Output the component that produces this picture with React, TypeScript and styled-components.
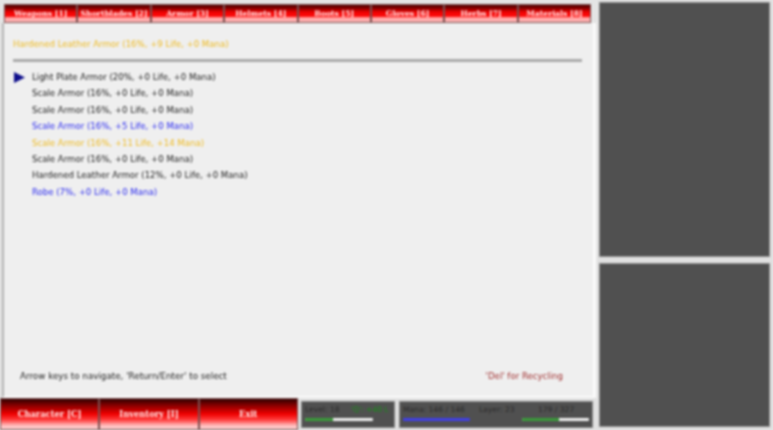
import React from "react"
import styled, { createGlobalStyle } from "styled-components"

const tabs = [
  "Weapons [1]",
  "Shortblades [2]",
  "Armor [3]",
  "Helmets [4]",
  "Boots [5]",
  "Gloves [6]",
  "Herbs [7]",
  "Materials [8]",
]

type Tone = "normal" | "magic" | "rare"

const items: { label: string; tone: Tone }[] = [
  { label: "Light Plate Armor (20%, +0 Life, +0 Mana)", tone: "normal" },
  { label: "Scale Armor (16%, +0 Life, +0 Mana)", tone: "normal" },
  { label: "Scale Armor (16%, +0 Life, +0 Mana)", tone: "normal" },
  { label: "Scale Armor (16%, +5 Life, +0 Mana)", tone: "magic" },
  { label: "Scale Armor (16%, +11 Life, +14 Mana)", tone: "rare" },
  { label: "Scale Armor (16%, +0 Life, +0 Mana)", tone: "normal" },
  { label: "Hardened Leather Armor (12%, +0 Life, +0 Mana)", tone: "normal" },
  { label: "Robe (7%, +0 Life, +0 Mana)", tone: "magic" },
]

const toneColors: Record<Tone, string> = {
  normal: "#222222",
  magic: "#2a2af0",
  rare: "#eebb22",
}

const GlobalStyle = createGlobalStyle`
  html, body {
    margin: 0;
    padding: 0;
    background: #e4e4e4;
    overflow: hidden;
  }
`

const Screen = styled.div`
  display: grid;
  grid-template-columns: 598px 175px;
  width: 773px;
  height: 430px;
  font-family: "DejaVu Sans", sans-serif;
  font-size: 8.58px;
  filter: blur(0.85px);
`

const LeftColumn = styled.div`
  display: flex;
  flex-direction: column;
  min-width: 0;
`

const TabBar = styled.div`
  display: grid;
  grid-template-columns: repeat(8, 73.4px);
  height: 19px;
  margin: 4px 0 0 4px;
`

const redButton = `
  display: flex;
  align-items: center;
  justify-content: center;
  box-sizing: border-box;
  color: #ffeeee;
  font-family: "DejaVu Serif", serif;
  font-weight: 700;
  border: 1px solid #7a5050;
  white-space: nowrap;
`

const Tab = styled.div`
  ${redButton}
  font-size: 7.7px;
  padding-bottom: 1px;
  background: linear-gradient(#4c0000 0%, #8c0000 20%, #f00000 42%, #ff1010 68%, #ffa0a0 74%, #ffb8b8 100%);
`

const Panel = styled.div`
  flex: 1;
  display: flex;
  flex-direction: column;
  box-sizing: border-box;
  margin: 0 2px 0 2px;
  padding: 0 0 0 9px;
  background: #efefef;
  border-left: 2px solid #b4b4b4;
  border-right: 3px solid #fbfbfb;
  border-bottom: 2px solid #fafafa;
`

const EquippedLine = styled.div`
  margin-top: 16px;
  height: 11px;
  line-height: 11px;
  color: #eebb22;
`

const Separator = styled.div`
  height: 3px;
  width: 569px;
  margin: 9px 0 7px 0;
  background: #aaaaaa;
`

const ItemList = styled.div`
  display: flex;
  flex-direction: column;
`

const ItemRow = styled.div`
  position: relative;
  height: 16.4px;
  line-height: 16.4px;
  padding-left: 19px;
`

const ItemText = styled.span<{ $tone: Tone }>`
  color: ${(p) => toneColors[p.$tone]};
`

const Cursor = styled.svg`
  position: absolute;
  left: 1px;
  top: 2.5px;
  width: 11px;
  height: 11px;
`

const Hints = styled.div`
  margin-top: auto;
  margin-bottom: 14px;
  display: flex;
  justify-content: space-between;
  padding: 0 30px 0 7px;
  line-height: 11px;
  font-size: 8.75px;
`

const Hint = styled.span`
  color: #222222;
`

const RecycleHint = styled.span`
  color: #a03030;
  font-size: 8.6px;
`

const BottomBar = styled.div`
  display: flex;
  height: 32px;
  background: #e0e0e0;
`

const ActionButton = styled.div`
  ${redButton}
  width: 99.3px;
  font-size: 8.3px;
  background: linear-gradient(#300000 0%, #8a0000 22%, #f00000 50%, #ff4040 70%, #ffb8b8 88%, #ffd4d4 100%);
`

const StatPanel = styled.div<{ $width: number; $gap: number }>`
  box-sizing: border-box;
  width: ${(p) => p.$width}px;
  height: 27px;
  margin: 3px 0 0 ${(p) => p.$gap}px;
  padding: 3px 3px 0 3px;
  background: #505050;
  border: 1px solid #8a8a8a;
  display: flex;
  flex-direction: column;
  gap: 4px;
`

const StatRow = styled.div`
  display: flex;
  font-size: 7.6px;
  line-height: 9px;
  color: #2a2a2a;
  white-space: nowrap;
`

const StatLabel = styled.span<{ $width: number }>`
  width: ${(p) => p.$width}px;
  flex: none;
`

const Regen = styled.span`
  color: #159015;
`

const BarRow = styled.div`
  display: flex;
  justify-content: space-between;
`

const Bar = styled.div<{ $width: number; $color: string }>`
  width: ${(p) => p.$width}px;
  height: 3px;
  border-radius: 1px;
  background: ${(p) => p.$color};
  overflow: hidden;
`

const BarFill = styled.div<{ $color: string }>`
  height: 100%;
  background: ${(p) => p.$color};
`

const RightColumn = styled.div`
  display: flex;
  flex-direction: column;
  gap: 6px;
  padding: 2px 3px 3px 1px;
  background: #e0e0e0;
`

const SidePanel = styled.div<{ $height: number }>`
  box-sizing: border-box;
  height: ${(p) => p.$height}px;
  background: #505050;
  border: 1px solid #8c8c8c;
`

const App = () => {
  return (
    <Screen>
      <GlobalStyle />
      <LeftColumn>
        <TabBar>
          {tabs.map((tab) => (
            <Tab key={tab}>{tab}</Tab>
          ))}
        </TabBar>
        <Panel>
          <EquippedLine>Hardened Leather Armor (16%, +9 Life, +0 Mana)</EquippedLine>
          <Separator />
          <ItemList>
            {items.map((item, i) => (
              <ItemRow key={i}>
                {i === 0 && (
                  <Cursor viewBox="0 0 11 11">
                    <polygon points="0,0 11,5.5 0,11" fill="#10108c" />
                  </Cursor>
                )}
                <ItemText $tone={item.tone}>{item.label}</ItemText>
              </ItemRow>
            ))}
          </ItemList>
          <Hints>
            <Hint>Arrow keys to navigate, 'Return/Enter' to select</Hint>
            <RecycleHint>'Del' for Recycling</RecycleHint>
          </Hints>
        </Panel>
        <BottomBar>
          <ActionButton>Character [C]</ActionButton>
          <ActionButton>Inventory [I]</ActionButton>
          <ActionButton>Exit</ActionButton>
          <StatPanel $width={94} $gap={3}>
            <StatRow>
              <StatLabel $width={46}>Level: 18</StatLabel>
              <Regen>'Q': +40 L</Regen>
            </StatRow>
            <BarRow>
              <Bar $width={68} $color="#f0f0f0">
                <BarFill $color="#3a9a3a" style={{ width: "41%" }} />
              </Bar>
            </BarRow>
          </StatPanel>
          <StatPanel $width={194} $gap={4}>
            <StatRow>
              <StatLabel $width={76}>Mana: 146 / 146</StatLabel>
              <StatLabel $width={59}>Layer: 23</StatLabel>
              <span>179 / 327</span>
            </StatRow>
            <BarRow>
              <Bar $width={67} $color="#3f3fe8" />
              <Bar $width={67} $color="#f0f0f0">
                <BarFill $color="#3a9a3a" style={{ width: "55%" }} />
              </Bar>
            </BarRow>
          </StatPanel>
        </BottomBar>
      </LeftColumn>
      <RightColumn>
        <SidePanel $height={255} />
        <SidePanel $height={164} />
      </RightColumn>
    </Screen>
  )
}

export default App
